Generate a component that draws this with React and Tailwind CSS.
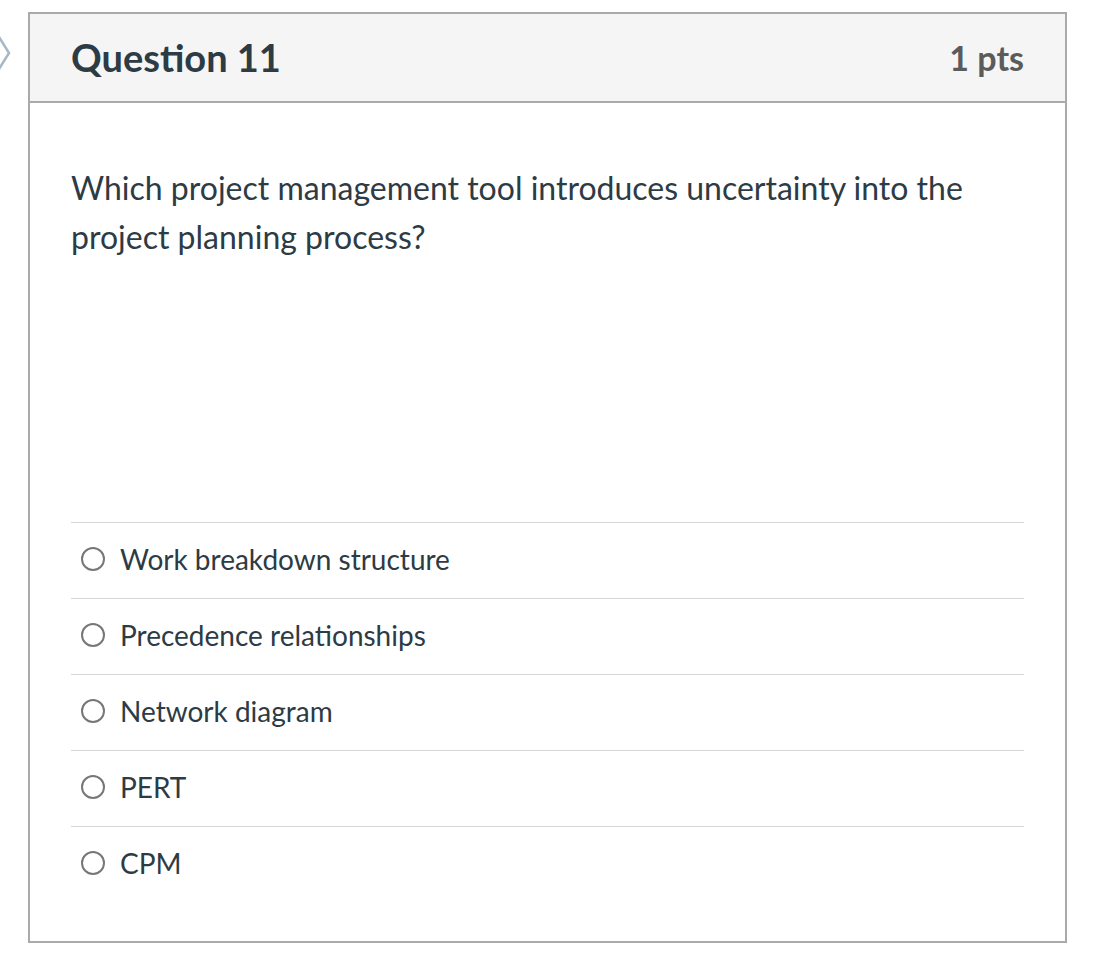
const answers = [
  "Work breakdown structure",
  "Precedence relationships",
  "Network diagram",
  "PERT",
  "CPM",
];

export default function App() {
  return (
    <div className="min-h-screen bg-white relative" style={{ fontFamily: "Lato, 'Open Sans', sans-serif" }}>
      {/* collapse arrow */}
      <svg className="absolute left-0 top-[36px]" width="12" height="34" viewBox="0 0 12 34">
        <path d="M-1 1 L9 17 L-1 33" fill="none" stroke="#a7b8c6" strokeWidth="2.5" />
      </svg>
      <div className="pt-[12px] pl-[28px] w-[1067px]">
        <div className="border-2 border-[#aaaaaa]">
          {/* header */}
          <div className="flex items-center justify-between h-[89px] bg-[#f5f5f5] border-b-2 border-[#aaaaaa] px-[41px]">
            <h2 className="text-[38px] font-bold text-[#2d3b45]">Question 11</h2>
            <span className="text-[34px] font-bold text-[#5b5b5b]">1 pts</span>
          </div>
          {/* body */}
          <div className="px-[41px] pt-[60px] pb-[39px]">
            <p className="text-[32px] leading-[49px] text-[#2d3b45] w-[940px]">
              Which project management tool introduces uncertainty into the project planning process?
            </p>
            <div className="mt-[261px]">
              {answers.map((a) => (
                <div key={a} className="flex items-center h-[76px] border-t border-[#d7d7d7] pl-[10px] pb-[4px] gap-[15px]">
                  <span className="w-[24px] h-[24px] rounded-full border-2 border-[#777777] bg-white" />
                  <span className="text-[28px] text-[#2d3b45]">{a}</span>
                </div>
              ))}
            </div>
          </div>
        </div>
      </div>
    </div>
  );
}
